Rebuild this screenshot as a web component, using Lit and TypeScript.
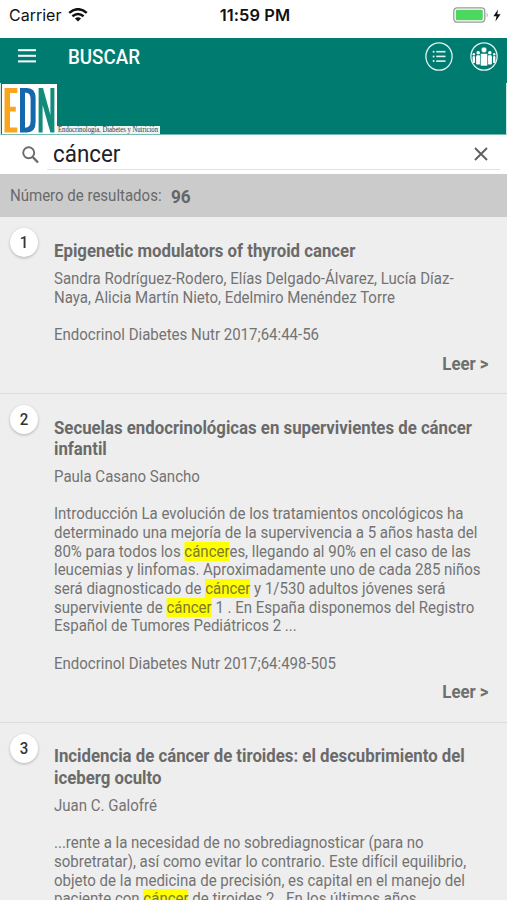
import { LitElement, html, css, svg } from "lit";
import { customElement, property } from "lit/decorators.js";

interface Article {
  title: string[];
  authors: string[];
  summary: string[];
  source: string;
}

const TERM = "cáncer";

const ARTICLES: Article[] = [
  {
    title: ["Epigenetic modulators of thyroid cancer"],
    authors: [
      "Sandra Rodríguez-Rodero, Elías Delgado-Álvarez, Lucía Díaz-",
      "Naya, Alicia Martín Nieto, Edelmiro Menéndez Torre",
    ],
    summary: [],
    source: "Endocrinol Diabetes Nutr 2017;64:44-56",
  },
  {
    title: ["Secuelas endocrinológicas en supervivientes de cáncer", "infantil"],
    authors: ["Paula Casano Sancho"],
    summary: [
      "Introducción La evolución de los tratamientos oncológicos ha",
      "determinado una mejoría de la supervivencia a 5 años hasta del",
      "80% para todos los cánceres, llegando al 90% en el caso de las",
      "leucemias y linfomas. Aproximadamente uno de cada 285 niños",
      "será diagnosticado de cáncer y 1/530 adultos jóvenes será",
      "superviviente de cáncer 1 . En España disponemos del Registro",
      "Español de Tumores Pediátricos 2 ...",
    ],
    source: "Endocrinol Diabetes Nutr 2017;64:498-505",
  },
  {
    title: ["Incidencia de cáncer de tiroides: el descubrimiento del", "iceberg oculto"],
    authors: ["Juan C. Galofré"],
    summary: [
      "...rente a la necesidad de no sobrediagnosticar (para no",
      "sobretratar), así como evitar lo contrario. Este difícil equilibrio,",
      "objeto de la medicina de precisión, es capital en el manejo del",
      "paciente con cáncer de tiroides 2 . En los últimos años",
    ],
    source: "",
  },
];

const highlight = (line: string) =>
  line.split(TERM).map((part, i) => (i ? html`<mark>${TERM}</mark>${part}` : part));

@customElement("status-bar")
export class StatusBar extends LitElement {
  static styles = css`
    :host {
      display: grid;
      grid-template-columns: 1fr auto 1fr;
      align-items: center;
      height: 38px;
      padding: 0 6px 8px 9px;
      box-sizing: border-box;
      background: #fff;
      color: #111;
      font: 400 16px/22px Inter, sans-serif;
    }
    .left, .right { display: flex; align-items: center; }
    .left { gap: 7px; }
    .right { justify-content: flex-end; gap: 4px; }
    .time { font-weight: 600; font-size: 16.4px; letter-spacing: 0.1px; }
    svg { display: block; }
  `;
  render() {
    return html`
      <div class="left">
        <span>Carrier</span>
        <svg width="20" height="14" viewBox="0 0 20 14" fill="none" stroke="#111" stroke-width="2.5">
          <path d="M1.2 4.9Q10-2.5 18.8 4.9" />
          <path d="M4.4 8.3Q10 3.7 15.6 8.3" />
          <path d="M10 13.6L6.9 10.5Q10 8.2 13.1 10.5Z" fill="#111" stroke="none" />
        </svg>
      </div>
      <div class="time">11:59 PM</div>
      <div class="right">
        <svg width="36" height="16" viewBox="0 0 36 16">
          <rect x=".8" y=".8" width="31" height="14.4" rx="3.4" fill="#fff" stroke="#999" stroke-width="1.3" />
          <rect x="2.8" y="2.7" width="27" height="10.6" rx="1.4" fill="#4cd75f" />
          <path d="M33.7 5.5Q35.6 8 33.7 10.5Z" fill="#999" />
        </svg>
        <svg width="8" height="13" viewBox="0 0 8 13"><path d="M5 .5L.4 7.3H3.5L2.4 12.5L7.6 5.3H4.3Z" fill="#111" /></svg>
      </div>
    `;
  }
}

@customElement("app-header")
export class AppHeader extends LitElement {
  static styles = css`
    :host { display: block; height: 97px; background: #007b70; overflow: hidden; }
    .bar { display: flex; height: 45px; align-items: flex-start; padding: 0 9px 0 18px; }
    .menu { margin-top: 11px; }
    .title {
      margin: 7px 0 0 32px;
      flex: 1;
      color: #fff;
      font: 500 20px/24px Roboto, sans-serif;
      transform: scaleX(0.938);
      transform-origin: left;
    }
    .action { margin: 4px 0 0 17px; }
    .action + .action { margin-left: 17px; }
    .brand {
      display: flex;
      align-items: flex-end;
      height: 52px;
      box-sizing: border-box;
      border: solid #cfe6e2;
      border-width: 0 1px 1px;
      border-bottom-color: #77b8b0;
    }
    .mark { margin-left: 1px; }
    .journal { background: #eef3f3; overflow: visible; }
    svg { display: block; }
  `;
  render() {
    const person = (x: number, y: number, r: number, w: number, h: number) => svg`
      <circle cx=${x} cy=${y} r=${r} />
      <rect x=${x - w / 2} y=${y + r + 0.7} width=${w} height=${h} rx="1.2" />`;
    return html`
      <div class="bar">
        <svg class="menu" width="18" height="14" viewBox="0 0 18 14" fill="#fff">
          <rect y=".2" width="18" height="2" /><rect y="5.8" width="18" height="2" /><rect y="11.4" width="18" height="2" />
        </svg>
        <div class="title">BUSCAR</div>
        <svg class="action" width="28" height="29" viewBox="0 0 28 29">
          <ellipse cx="14" cy="14.5" rx="13.1" ry="13.7" fill="none" stroke="#e0f2f0" stroke-width="1.3" />
          <g fill="#e0f2f0">
            <circle cx="8.6" cy="9.7" r="1" /><circle cx="8.6" cy="14.4" r="1" /><circle cx="8.6" cy="19.1" r="1" />
            <rect x="11.2" y="8.9" width="9.3" height="1.6" /><rect x="11.2" y="13.6" width="9.3" height="1.6" /><rect x="11.2" y="18.3" width="9.3" height="1.6" />
          </g>
        </svg>
        <svg class="action" width="28" height="29" viewBox="0 0 28 29">
          <ellipse cx="14" cy="14.5" rx="13.1" ry="13.7" fill="none" stroke="#e0f2f0" stroke-width="1.3" />
          <g fill="#fff">
            ${person(3.8, 12.2, 1.2, 2.4, 7)}${person(24.2, 12.2, 1.2, 2.4, 7)}
            ${person(8.2, 10.8, 1.8, 4.2, 9.2)}${person(19.8, 10.8, 1.8, 4.2, 9.2)}
          </g>
          <g fill="#fff" stroke="#007b70" stroke-width=".6">${person(14, 7.9, 2.8, 7.2, 12.6)}</g>
        </svg>
      </div>
      <div class="brand">
        <svg class="mark" width="55" height="50" viewBox="0 0 55 50">
          <rect width="55" height="50" fill="#fff" />
          <path d="M2.5 4H15.3V9H8V22.8H13.8V27.4H8V43.4H15.3V48.4H2.5Z" fill="#f9a51f" />
          <path fill-rule="evenodd" d="M18 4H25Q33.6 4 33.6 14V38Q33.6 48.4 25 48.4H18ZM23 8.6V43.8Q28.6 43.8 28.6 37V15Q28.6 8.6 23 8.6Z" fill="#1668ac" />
          <path d="M36.6 4H41L48.4 31V4H52.4V48.4H48.4L40.6 21V48.4H36.6Z" fill="#128b7a" />
        </svg>
        <svg class="journal" width="103" height="8" viewBox="0 0 103 8">
          <text x="1" y="6" font-family="Liberation Serif, serif" font-size="7.2" fill="#333" textLength="100" lengthAdjust="spacingAndGlyphs">Endocrinología, Diabetes y Nutrición</text>
        </svg>
      </div>
    `;
  }
}

@customElement("search-field")
export class SearchField extends LitElement {
  @property() value = "";
  static styles = css`
    :host { display: block; height: 39px; background: #fff; box-sizing: border-box; }
    .row { display: flex; align-items: center; height: 35px; margin: 0 7px 0 22px; }
    .field {
      flex: 1;
      display: flex;
      align-items: center;
      justify-content: space-between;
      height: 34px;
      margin-left: 8px;
      padding: 0 12px 0 6px;
      border-bottom: 1px solid #e3e3e3;
      color: #222;
      font: 400 24px/34px Roboto, sans-serif;
    }
    .value { margin-top: 3px; transform: scaleX(0.932); transform-origin: left; }
    .clear { margin-top: 4px; }
    .lens { margin-top: 4px; }
    svg { display: block; }
  `;
  render() {
    return html`
      <div class="row">
        <svg class="lens" width="17" height="18" viewBox="0 0 17 18" fill="none" stroke="#6b6b6b" stroke-width="1.9">
          <circle cx="6.7" cy="6.8" r="5.5" /><path d="M10.7 11L16 16.5" stroke-width="2.5" />
        </svg>
        <div class="field">
          <span class="value">${this.value}</span>
          <svg class="clear" width="14" height="14" viewBox="0 0 14 14" fill="none" stroke="#5f5f5f" stroke-width="1.9">
            <path d="M1 1L13 13M13 1L1 13" />
          </svg>
        </div>
      </div>
    `;
  }
}

@customElement("result-item")
export class ResultItem extends LitElement {
  @property({ type: Number }) index = 0;
  @property({ attribute: false }) article!: Article;
  static styles = css`
    :host {
      display: grid;
      grid-template-columns: 28px 434.5px;
      column-gap: 15.5px;
      align-items: start;
      padding: 0 19px 0 10px;
      border-bottom: 1px solid #dcdcdc;
      color: #737373;
      font: 400 16px/18.67px Roboto, sans-serif;
      white-space: nowrap;
    }
    .badge {
      width: 28px;
      height: 29px;
      margin-top: 11px;
      border-radius: 50%;
      background: #fff;
      box-shadow: 0 1px 3px rgba(0, 0, 0, 0.25);
      color: #333;
      font-weight: 500;
      font-size: 16px;
      line-height: 30px;
      text-align: center;
    }
    .badge span { display: block; transform: scaleX(0.938); }
    .body {
      width: calc(100% / 0.938);
      padding-top: 22.6px;
      transform: scaleX(0.938);
      transform-origin: left;
    }
    .title { color: #6a6a6a; font-weight: 700; font-size: 17.9px; line-height: 21.3px; margin-bottom: 9px; }
    .block { margin-bottom: 18.67px; }
    .source { height: 18.67px; }
    .more { margin-top: 8px; height: 40.4px; text-align: right; font-weight: 700; font-size: 17.9px; line-height: 21.3px; color: #6f6f6f; }
    mark { background: #ffff00; color: #7d7a2c; }
  `;
  render() {
    const a = this.article;
    return html`
      <div class="badge"><span>${this.index}</span></div>
      <div class="body">
        <div class="title">${a.title.map((l) => html`<div>${l}</div>`)}</div>
        <div class="block">${a.authors.map((l) => html`<div>${l}</div>`)}</div>
        ${a.summary.length
          ? html`<div class="block">${a.summary.map((l) => html`<div>${highlight(l)}</div>`)}</div>`
          : ""}
        <div class="source">${a.source}</div>
        <div class="more">Leer &gt;</div>
      </div>
    `;
  }
}

@customElement("app-root")
export class AppRoot extends LitElement {
  static styles = css`
    :host { display: block; height: 900px; overflow: hidden; background: #eeeeee; }
    .count {
      height: 43px;
      padding: 1px 10px 0;
      box-sizing: border-box;
      background: #cbcbcb;
      color: #696969;
      font: 400 16px/20px Roboto, sans-serif;
    }
    .line {
      display: flex;
      align-items: center;
      gap: 10px;
      height: 42px;
      transform: scaleX(0.938);
      transform-origin: left;
    }
    .number { font-weight: 700; font-size: 18.4px; color: #666; padding-top: 2px; }
  `;
  render() {
    return html`
      <status-bar></status-bar>
      <app-header></app-header>
      <search-field .value=${TERM}></search-field>
      <div class="count">
        <div class="line"><span>Número de resultados:</span><span class="number">96</span></div>
      </div>
      ${ARTICLES.map((a, i) => html`<result-item .index=${i + 1} .article=${a}></result-item>`)}
    `;
  }
}
